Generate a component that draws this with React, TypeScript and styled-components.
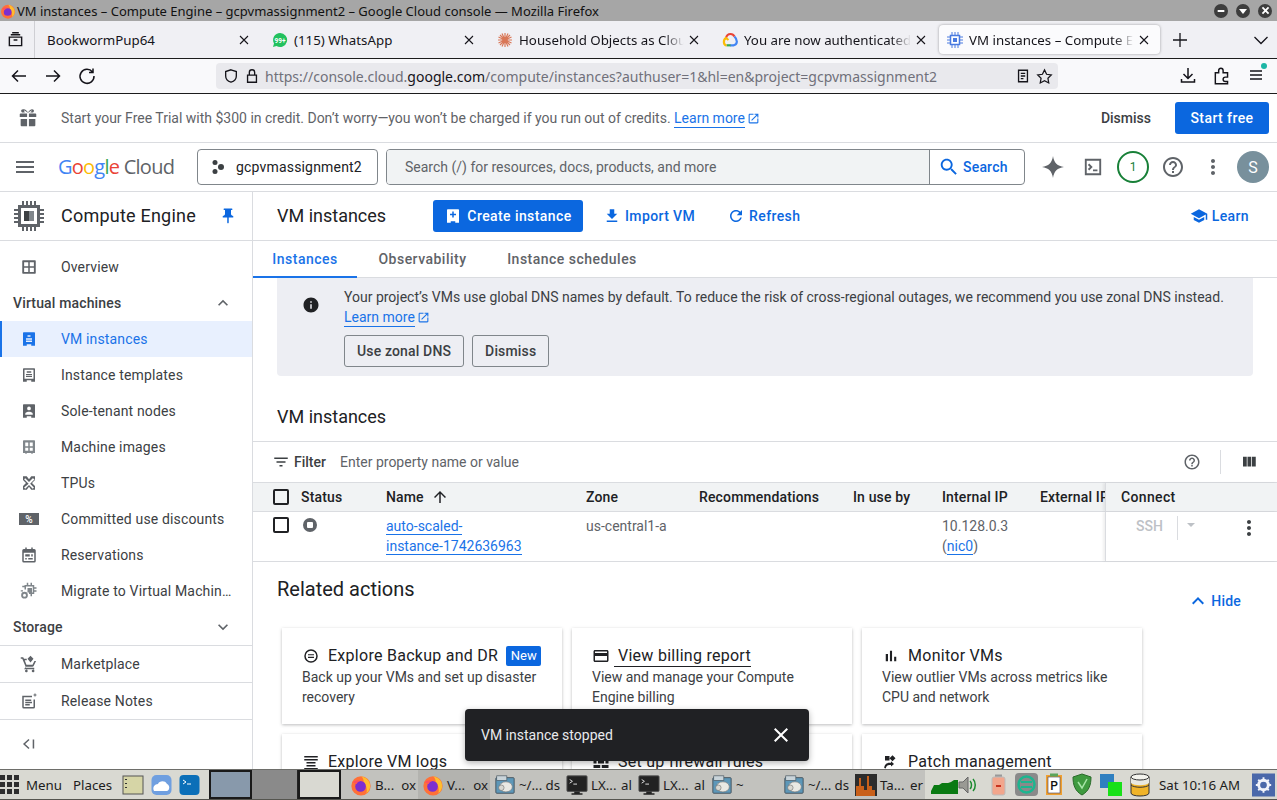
import React from "react";
import styled, { createGlobalStyle } from "styled-components";

const GlobalStyle = createGlobalStyle`
  html, body {
    margin: 0;
    padding: 0;
    height: 100%;
    overflow: hidden;
    background: #ffffff;
    font-family: Roboto, "Liberation Sans", sans-serif;
  }
  * {
    box-sizing: border-box;
  }
`;

const P = {
  menu: "M3 18h18v-2H3v2zm0-5h18v-2H3v2zm0-7v2h18V6H3z",
  info: "M12 2C6.48 2 2 6.48 2 12s4.48 10 10 10 10-4.48 10-10S17.52 2 12 2zm1 15h-2v-6h2v6zm0-8h-2V7h2v2z",
  search:
    "M15.5 14h-.79l-.28-.27C15.41 12.59 16 11.11 16 9.5 16 5.91 13.09 3 9.5 3S3 5.91 3 9.5 5.91 16 9.5 16c1.61 0 3.09-.59 4.23-1.57l.27.28v.79l5 4.99L20.49 19l-4.99-5zm-6 0C7.01 14 5 11.99 5 9.5S7.01 5 9.5 5 14 7.01 14 9.5 11.99 14 9.5 14z",
  refresh:
    "M17.65 6.35C16.2 4.9 14.21 4 12 4c-4.42 0-7.99 3.58-7.99 8s3.57 8 7.99 8c3.73 0 6.84-2.55 7.73-6h-2.08c-.82 2.33-3.04 4-5.65 4-3.31 0-6-2.69-6-6s2.69-6 6-6c1.66 0 3.14.69 4.22 1.78L13 11h7V4l-2.35 2.35z",
  help: "M11 18h2v-2h-2v2zm1-16C6.48 2 2 6.48 2 12s4.48 10 10 10 10-4.48 10-10S17.52 2 12 2zm0 18c-4.41 0-8-3.59-8-8s3.59-8 8-8 8 3.59 8 8-3.59 8-8 8zm0-14c-2.21 0-4 1.79-4 4h2c0-1.1.9-2 2-2s2 .9 2 2c0 2-3 1.75-3 5h2c0-2.25 3-2.5 3-5 0-2.21-1.79-4-4-4z",
  school: "M5 13.18v4L12 21l7-3.82v-4L12 17l-7-3.82zM12 3L1 9l11 6 9-4.91V17h2V9L12 3z",
  close:
    "M19 6.41L17.59 5 12 10.59 6.41 5 5 6.41 10.59 12 5 17.59 6.41 19 12 13.41 17.59 19 19 17.59 13.41 12z",
  filter: "M10 18h4v-2h-4v2zM3 6v2h18V6H3zm3 7h12v-2H6v2z",
  up: "M4 12l1.41 1.41L11 7.83V20h2V7.83l5.58 5.59L20 12l-8-8-8 8z",
  less: "M12 8l-6 6 1.41 1.41L12 10.83l4.59 4.58L18 14z",
  more: "M16.59 8.59L12 13.17 7.41 8.59 6 10l6 6 6-6z",
  columns: "M10 18h5V5h-5v13zm-6 0h5V5H4v13zM16 5v13h5V5h-5z",
  pin: "M16 9V4h1c.55 0 1-.45 1-1s-.45-1-1-1H7c-.55 0-1 .45-1 1s.45 1 1 1h1v5c0 1.66-1.34 3-3 3v2h5.97v7l1 1 1-1v-7H19v-2c-1.66 0-3-1.34-3-3z",
  download: "M19 9h-4V3H9v6H5l7 7 7-7zM5 18v2h14v-2H5z",
  external:
    "M19 19H5V5h7V3H5c-1.11 0-2 .9-2 2v14c0 1.1.89 2 2 2h14c1.1 0 2-.9 2-2v-7h-2v7zM14 3v2h3.59l-9.83 9.83 1.41 1.41L19 6.41V10h2V3h-7z",
  card: "M20 4H4c-1.11 0-1.99.89-1.99 2L2 18c0 1.11.89 2 2 2h16c1.11 0 2-.89 2-2V6c0-1.11-.89-2-2-2zm0 14H4v-6h16v6zm0-10H4V6h16v2z",
  bars: "M5 9.2h3V19H5zM10.6 5h2.8v14h-2.8zm5.6 8H19v6h-2.8z",
  dots: "M12 8c1.1 0 2-.9 2-2s-.9-2-2-2-2 .9-2 2 .9 2 2 2zm0 2c-1.1 0-2 .9-2 2s.9 2 2 2 2-.9 2-2-.9-2-2-2zm0 6c-1.1 0-2 .9-2 2s.9 2 2 2 2-.9 2-2-.9-2-2-2z",
  gift: "M4 7h7v4H3V8a1 1 0 0 1 1-1zm9 0h7a1 1 0 0 1 1 1v3h-8zM4 13h7v8H5a1 1 0 0 1-1-1zm9 0h7v7a1 1 0 0 1-1 1h-6zM7.5 2.5c1.6 0 3.4 1.4 4.5 3.5 1.1-2.1 2.9-3.5 4.500-3.500 1.300 0 2 .8 2 1.700 0 .8-.4 1.300-1 1.800h-3l2-2.100c-.9-.3-2.700 1-3.500 2.100h-2c-.8-1.100-2.600-2.400-3.500-2.100L8.500 6h-3c-.6-.5-1-1-1-1.800 0-.9.7-1.700 2-1.700z",
  overview:
    "M4 3h16a1 1 0 0 1 1 1v16a1 1 0 0 1-1 1H4a1 1 0 0 1-1-1V4a1 1 0 0 1 1-1zm1.500 2.500v5.500h5.500V5.500H5.500zm7.500 0v5.500h5.500V5.500H13zm-7.500 7.500v5.500h5.500V13H5.500zm7.500 0v5.500h5.500V13H13z",
  instance:
    "M5 3h14a1 1 0 0 1 1 1v17h-5v-2H9v2H4V4a1 1 0 0 1 1-1zm5 4v2h4V7h-4zm-2 4v2h8v-2H8zm0 3v2h8v-2H8z",
  template:
    "M5 3h14a1 1 0 0 1 1 1v17h-5v-2H9v2H4V4a1 1 0 0 1 1-1zm1 2v12h12V5H6zm3 2h6v2H9V7zm-1 3.500h8v1.500H8zm0 2.500h8v1.500H8z",
  tenant:
    "M5 3h14a1 1 0 0 1 1 1v17h-5v-2H9v2H4V4a1 1 0 0 1 1-1zm7 3a2.500 2.500 0 1 0 0 5 2.500 2.500 0 0 0 0-5zm-5 9.500V17h10v-1.500c0-1.700-3.300-2.500-5-2.500s-5 .8-5 2.500z",
  image:
    "M5 3h14a1 1 0 0 1 1 1v16h-3v1h-2v-1H9v1H7v-1H4V4a1 1 0 0 1 1-1zm2 3v5h4V6H7zm6 0v5h4V6h-4zm-6 7v4h4v-4H7zm6 0v4h4v-4h-4z",
  tpu: "M4 3h5l3 4 3-4h5v5l-4 4 4 4v5h-5l-3-4-3 4H4v-5l4-4-4-4V3zm3 2.500L5.500 7l6 6-6 5 1.500 1.500 5-5 5 5 1.500-1.500-5-5 6-6L17 5.500l-5 5-5-5z",
  calendar:
    "M7 2h2v2h6V2h2v2h2a2 2 0 0 1 2 2v14a2 2 0 0 1-2 2H5a2 2 0 0 1-2-2V6a2 2 0 0 1 2-2h2V2zM5 9v11h14V9H5zm2 2h6v3H7v-3zm8 0h2v3h-2v-3zM7 16h2v2H7v-2zm4 0h6v2h-6v-2z",
  cart: "M1 3h3.300l1 2H9v2H6.300l2.300 6h8.100l2.500-5h2.200l-3.200 6.500c-.3.6-.9 1-1.700 1H8.100l-1 1.500H19v2H5.500l2-3.300L3 5H1V3zM8 19.500a1.800 1.800 0 1 1 0 3.500 1.800 1.800 0 0 1 0-3.500zm9 0a1.800 1.800 0 1 1 0 3.500 1.800 1.800 0 0 1 0-3.500zM14 1l4 4-4 5-4-5 4-4z",
  notes:
    "M3 5h13v2H5v13h13V10h2v10a2 2 0 0 1-2 2H5a2 2 0 0 1-2-2V5zm4 5h8v2H7v-2zm0 3h9v2H7v-2zm0 3h6v2H7v-2zM20 1l.8 2.200L23 4l-2.200.8L20 7l-.8-2.200L17 4l2.200-.8L20 1z",
  migrate:
    "M9 1h2v3h3V1h2v3h3v3h3v2h-3v2h3v2h-3v3h-3v3h-2v-3h-2v-2h5V6H8v4H6V7H3V5h3V4h3V1zm1 7h6v6h-6V8zM6 13a4.500 4.500 0 1 1 0 9 4.500 4.500 0 0 1 0-9zm0 2.500a2 2 0 1 0 0 4 2 2 0 0 0 0-4zM1 11h3v1.500H1z",
  backup:
    "M12 3a9 9 0 1 1 0 18 9 9 0 0 1 0-18zm0 2a7 7 0 1 0 0 14 7 7 0 0 0 0-14zM8 9.500h8V11H8zM8 13h8v1.500H8z",
  logs: "M3 4h18v2H3zm0 4h18v2H3zm3 4h12v2H6zm0 4h12v2H6zm-3 4h18v2H3z",
  bricks: "M2 4h9v4H2zm11 0h9v4h-9zM2 10h4v4H2zm6 0h8v4H8zm10 0h4v4h-4zM2 16h9v4H2zm11 0h9v4h-9z",
  patch:
    "M4 4h6v6H4zm10-1l4 4-4 4-4-4zM3 20c0-4 3-7 7-7h2v-2l4 3.500-4 3.500v-2h-2c-2.500 0-4.500 1.500-5 4.500z",
  createVm:
    "M5 3h14a1 1 0 0 1 1 1v17h-5v-2H9v2H4V4a1 1 0 0 1 1-1zm6 3v3H8v2h3v3h2v-3h3V9h-3V6h-2z",
  spark:
    "M12 1c.8 6.500 4.500 10.200 11 11-6.500.8-10.200 4.500-11 11-.8-6.500-4.500-10.200-11-11 6.500-.8 10.200-4.500 11-11z",
};

const CLOSE_X = "M4.500 4.500l9 9M13.500 4.500l-9 9";

const Glyph = styled.svg<{ $color?: string; $size?: number }>`
  width: ${(p) => p.$size ?? 18}px;
  height: ${(p) => p.$size ?? 18}px;
  fill: ${(p) => p.$color ?? "#5f6368"};
  flex: none;
  display: block;
`;

const Icon = ({ d, size, color }: { d: string; size?: number; color?: string }) => (
  <Glyph viewBox="0 0 24 24" $size={size} $color={color}>
    <path d={d} fillRule="evenodd" />
  </Glyph>
);

const Page = styled.div`
  width: 100%;
  height: 100vh;
  display: flex;
  flex-direction: column;
  overflow: hidden;
`;

/* window frame */
const TitleBar = styled.div`
  height: 21px;
  flex: none;
  background: #a6a6a6;
  display: flex;
  align-items: center;
  padding: 0 5px 0 0;
  font: 13px "Noto Sans", sans-serif;
  color: #111;
`;

const TitleText = styled.span`
  flex: 1;
  margin-left: 1px;
`;

const WinButtons = styled.div`
  display: flex;
  gap: 8px;
`;

const WinButton = styled.span`
  width: 14px;
  height: 14px;
  border-radius: 50%;
  background: #3d3d3d;
  display: flex;
  align-items: center;
  justify-content: center;
`;

const TabStrip = styled.div`
  height: 38px;
  flex: none;
  background: #f0f0f4;
  border-bottom: 1px solid #1c1c1c;
  display: flex;
  align-items: stretch;
`;

const TabManager = styled.div`
  width: 35px;
  flex: none;
  display: flex;
  align-items: center;
  padding-left: 7px;
  border-right: 1px solid #cfcfd4;
`;

const BrowserTab = styled.div<{ $active?: boolean; $width: number }>`
  width: ${(p) => p.$width}px;
  flex: none;
  height: 29px;
  margin: 4px 0 0 ${(p) => (p.$active ? "2px" : "0")};
  display: flex;
  align-items: center;
  padding: 0 8px 0 ${(p) => (p.$active ? "8px" : "12px")};
  gap: 6px;
  border-radius: 4px;
  background: ${(p) => (p.$active ? "#fbfbfd" : "transparent")};
  box-shadow: ${(p) => (p.$active ? "0 0 3px rgba(0,0,0,0.35)" : "none")};
  font: 13.3px "Noto Sans", sans-serif;
  color: #15141a;
`;

const TabLabel = styled.span<{ $fade?: boolean }>`
  flex: 1;
  min-width: 0;
  overflow: hidden;
  white-space: nowrap;
  margin-right: ${(p) => (p.$fade ? "-4px" : "0")};
  mask-image: ${(p) => (p.$fade ? "linear-gradient(to right, #000 88%, transparent 100%)" : "none")};
`;

const StripEnd = styled.div`
  flex: 1;
  display: flex;
  align-items: center;
  justify-content: space-between;
  padding: 0 7px 0 11px;
`;

const NavBar = styled.div`
  height: 35px;
  flex: none;
  background: #f9f9fb;
  border-bottom: 1px solid #1c1c1c;
  display: flex;
  align-items: center;
  padding: 0 12px 0 10px;
`;

const NavButtons = styled.div`
  width: 206px;
  flex: none;
  display: flex;
  gap: 16px;
`;

const UrlBar = styled.div`
  width: 842px;
  height: 26px;
  flex: none;
  border-radius: 4px;
  background: #e9e9ed;
  display: flex;
  align-items: center;
  padding: 0 5px 0 7px;
  gap: 5px;
  font: 14px "Noto Sans", sans-serif;
  color: #70707a;
`;

const UrlText = styled.span`
  flex: 1;
  white-space: nowrap;
  > b {
    font-weight: 400;
    color: #15141a;
  }
`;

const NavEnd = styled.div`
  flex: 1;
  display: flex;
  justify-content: flex-end;
  gap: 15px;
`;

const MenuDot = styled.span`
  position: absolute;
  top: -3px;
  right: -2px;
  width: 6px;
  height: 6px;
  border-radius: 50%;
  background: #1db6a5;
`;

const MenuWrap = styled.span`
  position: relative;
  display: block;
`;

/* console area */
const Viewport = styled.div`
  flex: 1;
  min-height: 0;
  display: flex;
  flex-direction: column;
  position: relative;
  overflow: hidden;
`;

const TrialBar = styled.div`
  height: 49px;
  flex: none;
  border-bottom: 1px solid #dadce0;
  display: flex;
  align-items: center;
  padding: 0 8px 0 17px;
  font-size: 14px;
  color: #5f6368;
`;

const TrialText = styled.span`
  margin-left: 22px;
  flex: 1;
  display: flex;
  align-items: center;
  white-space: pre;
`;

const Anchor = styled.a`
  color: #1a73e8;
  border-bottom: 1px solid #1a73e8;
  line-height: 18px;
  margin-right: 2px;
`;

const TextButton = styled.span`
  font-weight: 500;
  color: #3c4043;
  margin-right: 24px;
`;

const PrimaryButton = styled.span<{ $width: number }>`
  width: ${(p) => p.$width}px;
  height: 32px;
  border-radius: 3px;
  background: #0b67df;
  color: #fff;
  font-size: 14px;
  font-weight: 500;
  letter-spacing: 0.42px;
  display: flex;
  align-items: center;
  justify-content: center;
  gap: 5px;
`;

const CloudHeader = styled.div`
  height: 49px;
  flex: none;
  border-bottom: 1px solid #dadce0;
  display: flex;
  align-items: center;
  padding: 0 4px 0 13px;
`;

const Logo = styled.div`
  margin-left: 21px;
  width: 139px;
  flex: none;
  font: 20px "Open Sans", sans-serif;
  letter-spacing: -0.75px;
  color: #5f6368;
  white-space: pre;
  margin-top: -2px;
`;

const LogoLetter = styled.span<{ $c: string }>`
  color: ${(p) => p.$c};
`;

const ProjectPicker = styled.div`
  width: 181px;
  height: 36px;
  flex: none;
  border: 1px solid #80868b;
  border-radius: 4px;
  display: flex;
  align-items: center;
  gap: 11px;
  padding-left: 13px;
  font-size: 14px;
  letter-spacing: 0.18px;
  color: #202124;
`;

const SearchBox = styled.div`
  width: 639px;
  height: 36px;
  flex: none;
  margin-left: 8px;
  border: 1px solid #80868b;
  border-radius: 4px;
  display: flex;
  overflow: hidden;
  font-size: 14px;
`;

const SearchInput = styled.div`
  flex: 1;
  background: #f1f3f4;
  color: #5f6368;
  display: flex;
  align-items: center;
  padding-left: 18px;
`;

const SearchAction = styled.div`
  width: 95px;
  flex: none;
  border-left: 1px solid #80868b;
  display: flex;
  align-items: center;
  gap: 3px;
  padding-left: 8px;
  color: #0b67df;
  font-weight: 500;
  letter-spacing: 0.2px;
`;

const HeaderTools = styled.div`
  margin-left: 8px;
  display: grid;
  grid-template-columns: repeat(6, 40px);
  align-items: center;
  justify-items: center;
`;

const CountRing = styled.div`
  width: 32px;
  height: 32px;
  border: 2px solid #188038;
  border-radius: 50%;
  display: flex;
  align-items: center;
  justify-content: center;
  font-size: 12px;
  color: #188038;
`;

const Avatar = styled.div`
  width: 32px;
  height: 32px;
  border-radius: 50%;
  background: #78909c;
  color: #fff;
  font-size: 16px;
  display: flex;
  align-items: center;
  justify-content: center;
`;

const Body = styled.div`
  flex: 1;
  min-height: 0;
  display: flex;
`;

/* left navigation */
const Sidebar = styled.nav`
  width: 253px;
  flex: none;
  border-right: 1px solid #dadce0;
  display: flex;
  flex-direction: column;
  font-size: 14px;
  color: #3c4043;
`;

const ProductHead = styled.div`
  height: 49px;
  flex: none;
  border-bottom: 1px solid #dadce0;
  display: flex;
  align-items: center;
  padding: 0 15px 0 13px;
`;

const ProductName = styled.span`
  flex: 1;
  margin: -2px 0 0 16px;
  font-size: 18px;
  letter-spacing: 0.22px;
  color: #202124;
`;

const NavList = styled.div`
  padding-top: 8px;
  display: flex;
  flex-direction: column;
`;

const NavRow = styled.div<{ $active?: boolean }>`
  height: 36px;
  display: flex;
  align-items: center;
  padding-left: 20px;
  gap: 23px;
  white-space: nowrap;
  color: ${(p) => (p.$active ? "#1a73e8" : "#3c4043")};
  background: ${(p) => (p.$active ? "#e8f0fe" : "transparent")};
  box-shadow: ${(p) => (p.$active ? "inset 2px 0 0 #1a73e8" : "none")};
  letter-spacing: 0.15px;
`;

const NavGroup = styled.div`
  height: 36px;
  display: flex;
  align-items: center;
  justify-content: space-between;
  padding: 0 19px 0 13px;
  font-weight: 500;
  color: #3c4043;
  letter-spacing: 0.15px;
`;

const FootRow = styled(NavRow)`
  height: 37px;
  border-top: 1px solid #dadce0;
`;

const CollapseRow = styled.div`
  height: 49px;
  border-top: 1px solid #dadce0;
  display: flex;
  align-items: center;
  padding-left: 21px;
`;

/* main column */
const Main = styled.main`
  flex: 1;
  min-width: 0;
  display: flex;
  flex-direction: column;
  overflow: hidden;
  font-size: 14px;
`;

const Toolbar = styled.div`
  height: 49px;
  flex: none;
  border-bottom: 1px solid #dadce0;
  display: flex;
  align-items: center;
  padding: 0 28px 0 24px;
`;

const PageTitle = styled.h1`
  width: 156px;
  margin: -2px 0 0;
  font-size: 18px;
  font-weight: 400;
  color: #202124;
`;

const ToolLink = styled.span<{ $left: number }>`
  margin-left: ${(p) => p.$left}px;
  display: flex;
  align-items: center;
  gap: 4px;
  color: #0b67df;
  font-weight: 500;
  letter-spacing: 0.38px;
`;

const LearnLink = styled(ToolLink)`
  margin-left: auto;
`;

const TabRow = styled.div`
  height: 37px;
  flex: none;
  border-bottom: 1px solid #dadce0;
  display: flex;
`;

const PageTab = styled.div<{ $active?: boolean; $width: number }>`
  width: ${(p) => p.$width}px;
  display: flex;
  align-items: center;
  justify-content: center;
  padding-bottom: 2px;
  font-weight: 500;
  letter-spacing: 0.48px;
  color: ${(p) => (p.$active ? "#1a73e8" : "#5f6368")};
  box-shadow: ${(p) => (p.$active ? "inset 0 -2px 0 #1a73e8" : "none")};
  margin-bottom: -1px;
`;

const Notice = styled.div`
  height: 98px;
  flex: none;
  margin: 0 24px;
  padding: 9px 10px 0 25px;
  background: #edeef3;
  border-radius: 0 0 4px 4px;
  display: flex;
  gap: 24px;
  color: #3c4043;
`;

const NoticeIcon = styled.div`
  padding-top: 9px;
`;

const NoticeBody = styled.div`
  line-height: 20px;
`;

const ExternalLine = styled.div`
  display: flex;
  align-items: center;
  margin-top: 1px;
`;

const NoticeActions = styled.div`
  display: flex;
  gap: 8px;
  margin-top: 8px;
`;

const OutlineButton = styled.span`
  height: 32px;
  padding: 0 12px;
  border: 1px solid #80868b;
  border-radius: 3px;
  display: flex;
  align-items: center;
  font-weight: 500;
  letter-spacing: 0.15px;
  color: #3c4043;
`;

const SectionTitle = styled.h2`
  height: 65px;
  flex: none;
  margin: 0;
  padding: 29px 24px 0;
  font-size: 18px;
  line-height: 24px;
  font-weight: 400;
  color: #202124;
`;

const FilterBar = styled.div`
  height: 41px;
  flex: none;
  border-top: 1px solid #dadce0;
  display: flex;
  align-items: center;
  padding: 0 19px 0 19px;
  gap: 4px;
`;

const FilterLabel = styled.span`
  font-weight: 500;
  color: #3c4043;
  width: 42px;
`;

const FilterHint = styled.span`
  flex: 1;
  color: #5f6368;
`;

const FilterDivider = styled.span`
  width: 1px;
  height: 24px;
  background: #dadce0;
  margin: 0 15px;
`;

const GridRow = styled.div<{ $head?: boolean }>`
  display: grid;
  grid-template-columns: 48px 85px 200px 113px 154px 89px 98px 65px 172px;
  height: ${(p) => (p.$head ? "30px" : "51px")};
  flex: none;
  border-top: 1px solid #dadce0;
  background: ${(p) => (p.$head ? "#f1f3f4" : "#fff")};
  border-bottom: 1px solid #dadce0;
  margin-bottom: ${(p) => (p.$head ? "-1px" : "0")};
  color: ${(p) => (p.$head ? "#202124" : "#5f6368")};
  font-weight: ${(p) => (p.$head ? 500 : 400)};
  letter-spacing: ${(p) => (p.$head ? "0.15px" : "0")};
  line-height: 20px;
`;

const HeadCell = styled.div`
  display: flex;
  align-items: center;
  white-space: nowrap;
  overflow: hidden;
  gap: 7px;
`;

const Cell = styled.div`
  padding-top: 4px;
`;

const CheckCell = styled.div<{ $head?: boolean }>`
  padding: ${(p) => (p.$head ? "6px" : "5px")} 0 0 20px;
`;

const CheckBox = styled.span`
  display: block;
  width: 16px;
  height: 16px;
  border: 2px solid #202124;
  border-radius: 2px;
`;

const StopDot = styled.span`
  display: flex;
  width: 14px;
  height: 14px;
  margin: 2px 0 0 2px;
  border-radius: 50%;
  background: #5f6368;
  align-items: center;
  justify-content: center;
  &::after {
    content: "";
    width: 6px;
    height: 6px;
    background: #fff;
    border-radius: 1px;
  }
`;

const TableLink = styled.a`
  color: #1a73e8;
  border-bottom: 1px solid #1a73e8;
`;

const ConnectHead = styled(HeadCell)`
  padding-left: 15px;
  border-left: 1px solid #dadce0;
  box-shadow: -2px 0 2px rgba(60, 64, 67, 0.08);
  letter-spacing: 0.35px;
`;

const ConnectCell = styled.div`
  border-left: 1px solid #dadce0;
  box-shadow: -2px 0 2px rgba(60, 64, 67, 0.08);
  padding: 4px 16px 0 30px;
  display: flex;
  align-items: flex-start;
`;

const SshLabel = styled.span`
  width: 42px;
  height: 24px;
  line-height: 20px;
  font-weight: 500;
  color: #bdc1c6;
  border-right: 1px solid #dadce0;
`;

const Caret = styled.span`
  margin: 7px 0 0 9px;
  width: 0;
  height: 0;
  border-left: 4px solid transparent;
  border-right: 4px solid transparent;
  border-top: 4px solid #bdc1c6;
  flex: 1;
  max-width: 8px;
`;

const RowMenu = styled.span`
  margin-left: auto;
`;

const RelatedHead = styled.div`
  height: 66px;
  flex: none;
  display: flex;
  justify-content: space-between;
  padding: 14px 36px 0 24px;
`;

const RelatedTitle = styled.h2`
  margin: 0;
  font-size: 20px;
  line-height: 26px;
  font-weight: 400;
  color: #202124;
`;

const HideLink = styled.span`
  margin-top: 15px;
  height: 20px;
  display: flex;
  align-items: center;
  gap: 1px;
  color: #0b67df;
  font-weight: 500;
  letter-spacing: 0.2px;
`;

const CardGrid = styled.div`
  display: grid;
  grid-template-columns: repeat(3, 280px);
  grid-auto-rows: 96px;
  gap: 10px;
  padding-left: 29px;
`;

const ActionCard = styled.div`
  padding: 18px 20px 0;
  box-shadow: 0 1px 3px rgba(60, 64, 67, 0.35);
  color: #3c4043;
  line-height: 20px;
`;

const CardTitle = styled.div`
  display: flex;
  align-items: center;
  gap: 8px;
  height: 20px;
  font-size: 16px;
  letter-spacing: 0.27px;
  color: #202124;
  margin-bottom: 1px;
  white-space: nowrap;
`;

const UnderlinedTitle = styled.span`
  border-bottom: 1px solid #202124;
  margin-left: -4px;
  padding-left: 4px;
`;

const NewBadge = styled.span`
  width: 35px;
  height: 20px;
  border-radius: 2px;
  background: #0b67df;
  color: #fff;
  font-size: 13px;
  font-weight: 400;
  letter-spacing: 0;
  display: flex;
  align-items: center;
  justify-content: center;
`;

const Toast = styled.div`
  position: absolute;
  left: 465px;
  bottom: 8px;
  width: 344px;
  height: 52px;
  border-radius: 4px;
  background: #202124;
  color: #e8eaed;
  font-size: 14px;
  display: flex;
  align-items: center;
  justify-content: space-between;
  padding: 0 16px;
  box-shadow: 0 2px 6px rgba(0, 0, 0, 0.3);
`;

/* desktop panel */
const Taskbar = styled.footer`
  height: 31px;
  flex: none;
  background: #d9d9d2;
  border-top: 1px solid #6e6e6a;
  border-bottom: 1px solid #55554f;
  display: flex;
  align-items: center;
  font: 13.3px "Noto Sans", sans-serif;
  color: #1c1c1c;
  white-space: nowrap;
`;

const AppsGrid = styled.span`
  width: 20px;
  margin-right: 6px;
  flex: none;
  display: grid;
  grid-template-columns: repeat(3, 5px);
  gap: 2px;
  > i {
    height: 5px;
    background: #2e2e2e;
  }
`;

const PanelWord = styled.span<{ $width: number }>`
  width: ${(p) => p.$width}px;
  flex: none;
`;

const Launchers = styled.div`
  display: flex;
  gap: 7px;
  width: 87px;
  flex: none;
`;

const PagerCell = styled.div<{ $on?: boolean }>`
  width: 43px;
  height: 100%;
  flex: none;
  background: ${(p) => (p.$on ? "#8899ab" : "#d9d9d2")};
  border: 2px solid #1a1a1a;
`;

const PagerGap = styled.div`
  width: 46px;
  height: 100%;
  flex: none;
  background: #8a8a8a;
  border-right: 1px solid #222;
`;

const TaskList = styled.div`
  width: 584px;
  height: 100%;
  flex: none;
  display: flex;
  background: #c2c2be;
  padding-left: 1px;
`;

const Task = styled.div<{ $active?: boolean; $width: number; $first?: boolean }>`
  width: ${(p) => p.$width}px;
  flex: none;
  display: flex;
  align-items: center;
  padding-left: ${(p) => (p.$first ? "8px" : "4px")};
  gap: 3px;
  background: ${(p) => (p.$active ? "#b3b3af" : "transparent")};
`;

const TaskText = styled.span`
  flex: 1;
  display: flex;
  justify-content: space-between;
  padding-right: 2px;
`;

const Tray = styled.div`
  flex: 1;
  display: flex;
  align-items: center;
  padding-left: 6px;
`;

const TrayGap = styled.span<{ $w: number }>`
  width: ${(p) => p.$w}px;
  flex: none;
`;

/* drawings */
const Firefox = ({ size = 22 }: { size?: number }) => (
  <svg width={size} height={size} viewBox="0 0 24 24" style={{ flex: "none" }}>
    <circle cx="12" cy="13" r="10.500" fill="#ff7139" />
    <path d="M12 2.500c5.500 1 10 5 10 10.500 0 3-1.500 6-4 8 1-4 0-9-3-12 0-3-1-5-3-6.500z" fill="#ffbd2e" />
    <circle cx="11.500" cy="13.500" r="5.800" fill="#7b2fd0" />
    <path d="M3 9c2-2 5-3 8-1.500-2 .5-3.500 2-3.500 3.500 0 0-2-1-4.500-2z" fill="#ff4f5e" />
  </svg>
);

const FolderApp = () => (
  <svg width="22" height="22" viewBox="0 0 24 24" style={{ flex: "none" }}>
    <rect x="2" y="4" width="20" height="17" rx="1" fill="#5d97b8" stroke="#45525c" />
    <rect x="3" y="2" width="11" height="5" fill="#c9d4da" stroke="#45525c" strokeWidth="0.7" />
    <ellipse cx="13" cy="14" rx="7" ry="5.500" fill="#e9e9e4" stroke="#777" strokeWidth="0.7" />
    <circle cx="8" cy="15" r="3" fill="#d8d8d2" stroke="#666" strokeWidth="0.6" />
  </svg>
);

const TerminalApp = () => (
  <svg width="22" height="22" viewBox="0 0 24 24" style={{ flex: "none" }}>
    <rect x="1" y="2" width="22" height="17" rx="1" fill="#222" stroke="#555" />
    <path d="M4 6l3 2-3 2M8 11h4" stroke="#eee" fill="none" />
    <path d="M9 19h6v2h3v1.500H6V21h3z" fill="#222" />
  </svg>
);

const ChipTab = () => (
  <svg width="16" height="16" viewBox="0 0 16 16" style={{ flex: "none" }}>
    <rect x="3.500" y="3.500" width="9" height="9" fill="#fff" stroke="#4a7be0" strokeWidth="1.500" />
    <rect x="6" y="6" width="4" height="4" fill="#4a7be0" />
    <path d="M5 0v3M8 0v3M11 0v3M5 13v3M8 13v3M11 13v3M0 5h3M0 8h3M0 11h3M13 5h3M13 8h3M13 11h3" stroke="#4a7be0" />
  </svg>
);

const CloudTab = () => (
  <svg width="16" height="16" viewBox="0 0 16 16" style={{ flex: "none" }}>
    <path d="M4 6c.6-2.500 2.500-4 4.500-4 1.800 0 3.200 1 3.900 2.500" stroke="#ea4335" strokeWidth="2.200" fill="none" />
    <path d="M12.400 4.500C14 6 15 8 14.800 10c-.2 2-1.500 3-3.300 3.300H8" stroke="#4285f4" strokeWidth="2.200" fill="none" />
    <path d="M8.500 13.300H4.500" stroke="#34a853" strokeWidth="2.200" />
    <path d="M4.500 13.300C1.500 13 0.800 8 4 6l2.500 2" stroke="#fbbc05" strokeWidth="2.200" fill="none" />
  </svg>
);

const ClaudeTab = () => (
  <svg width="16" height="16" viewBox="0 0 16 16" style={{ flex: "none" }}>
    <path
      d="M8 1v14M1 8h14M3 3l10 10M13 3L3 13M5 1.500l6 13M11 1.500l-6 13M1.500 5l13 6M14.500 5l-13 6"
      stroke="#d97757"
      strokeWidth="1.200"
    />
  </svg>
);

const WhatsTab = () => (
  <svg width="16" height="16" viewBox="0 0 16 16" style={{ flex: "none" }}>
    <path d="M8 1a7 7 0 1 1-3.500 13L1 15l1-3.500A7 7 0 0 1 8 1z" fill="#22c15e" />
    <text x="8" y="10.500" fontSize="6.500" fontFamily="Roboto" fontWeight="700" textAnchor="middle" fill="#fff">
      99+
    </text>
  </svg>
);

const Stroke = ({ d, size = 18, color = "#15141a", w = 1.500 }: { d: string; size?: number; color?: string; w?: number }) => (
  <svg width={size} height={size} viewBox="0 0 18 18" fill="none" stroke={color} strokeWidth={w} style={{ flex: "none", display: "block" }}>
    <path d={d} />
  </svg>
);

const ComputeLogo = () => (
  <svg width="32" height="32" viewBox="0 0 32 32" style={{ flex: "none" }}>
    <rect x="6.500" y="6.500" width="19" height="19" fill="#fff" stroke="#5f6368" strokeWidth="3" />
    <path d="M11 11h10v10H11z" fill="#80868b" />
    <path d="M11 11h5v10h-5z" fill="#3c4043" />
    <path d="M10 1v4M14 1v4M18 1v4M22 1v4M10 27v4M14 27v4M18 27v4M22 27v4M1 10h4M1 14h4M1 18h4M1 22h4M27 10h4M27 14h4M27 18h4M27 22h4" stroke="#5f6368" strokeWidth="2" />
  </svg>
);

const DiscountIcon = () => (
  <svg width="20" height="18" viewBox="0 0 20 18" style={{ flex: "none", marginLeft: -1, marginRight: -1 }}>
    <rect y="3" width="20" height="12" fill="#5f6368" />
    <text x="10" y="13" fontSize="10" fontFamily="Roboto" fontWeight="500" fill="#fff" textAnchor="middle">
      %
    </text>
  </svg>
);

const ProjectDots = () => (
  <svg width="14" height="16" viewBox="0 0 14 16" style={{ flex: "none" }}>
    <circle cx="4" cy="3.500" r="2.500" fill="#3c4043" />
    <circle cx="10" cy="8" r="3" fill="#3c4043" />
    <circle cx="4" cy="12.500" r="2.500" fill="#3c4043" />
  </svg>
);

const navItems: { label: string; d?: string; active?: boolean; tone?: string }[] = [
  { label: "VM instances", d: P.instance, active: true, tone: "#1a73e8" },
  { label: "Instance templates", d: P.template },
  { label: "Sole-tenant nodes", d: P.tenant },
  { label: "Machine images", d: P.image, tone: "#80868b" },
  { label: "TPUs", d: P.tpu },
  { label: "Committed use discounts" },
  { label: "Reservations", d: P.calendar },
  { label: "Migrate to Virtual Machin…", d: P.migrate, tone: "#80868b" },
];

const logoLetters = [
  ["G", "#4285f4"],
  ["o", "#ea4335"],
  ["o", "#fbbc05"],
  ["g", "#4285f4"],
  ["l", "#34a853"],
  ["e", "#ea4335"],
];

const App = () => {
  return (
    <Page>
      <GlobalStyle />
      <TitleBar>
        <Firefox size={16} />
        <TitleText>VM instances – Compute Engine – gcpvmassignment2 – Google Cloud console — Mozilla Firefox</TitleText>
        <WinButtons>
          <WinButton>
            <Stroke d="M4 9h10" size={12} color="#fff" w={3} />
          </WinButton>
          <WinButton>
            <svg width="10" height="10" viewBox="0 0 10 10">
              <path d="M1 3h8L5 8z" fill="#fff" />
            </svg>
          </WinButton>
          <WinButton>
            <Stroke d="M4 4l10 10M14 4L4 14" size={11} color="#fff" w={3} />
          </WinButton>
        </WinButtons>
      </TitleBar>

      <TabStrip>
        <TabManager>
          <Stroke d="M2.500 6.500h13v9h-13zM4 4h10M5.500 1.800h7M7 9.500h4" size={17} />
        </TabManager>
        <BrowserTab $width={225}>
          <TabLabel>BookwormPup64</TabLabel>
          <Stroke d={CLOSE_X} size={16} w={1.200} />
        </BrowserTab>
        <BrowserTab $width={225}>
          <WhatsTab />
          <TabLabel>(115) WhatsApp</TabLabel>
          <Stroke d={CLOSE_X} size={16} w={1.200} />
        </BrowserTab>
        <BrowserTab $width={225}>
          <ClaudeTab />
          <TabLabel $fade>Household Objects as Cloud Computing</TabLabel>
          <Stroke d={CLOSE_X} size={16} w={1.200} />
        </BrowserTab>
        <BrowserTab $width={227}>
          <CloudTab />
          <TabLabel $fade>You are now authenticated with the gcloud</TabLabel>
          <Stroke d={CLOSE_X} size={16} w={1.200} />
        </BrowserTab>
        <BrowserTab $active $width={221}>
          <ChipTab />
          <TabLabel $fade>VM instances – Compute Engine</TabLabel>
          <Stroke d={CLOSE_X} size={16} w={1.200} />
        </BrowserTab>
        <StripEnd>
          <Stroke d="M9 2v14M2 9h14" size={18} w={1.300} />
          <Stroke d="M2.500 6l6.500 6.500L15.500 6" size={18} w={1.300} />
        </StripEnd>
      </TabStrip>

      <NavBar>
        <NavButtons>
          <Stroke d="M16 9H3M8 3.500L2.500 9 8 14.500" />
          <Stroke d="M2 9h13M10 3.500L15.500 9 10 14.500" />
          <Stroke d="M14.500 5A7 7 0 1 0 16 9M15 1.500V5.500H11" />
        </NavButtons>
        <UrlBar>
          <Stroke d="M9 2l6 2v5c0 3.500-2.500 6-6 7-3.500-1-6-3.500-6-7V4z" size={16} />
          <Stroke d="M4 8h10v8H4zM6 8V5a3 3 0 0 1 6 0v3" size={16} />
          <UrlText>
            https://console.cloud.<b>google.com</b>/compute/instances?authuser=1&amp;hl=en&amp;project=gcpvmassignment2
          </UrlText>
          <Stroke d="M4 2.500h10v13H4zM6.500 6h5M6.500 9h5M6.500 12h3" size={16} />
          <Stroke d="M9 2l2.200 4.600 5 .7-3.600 3.500.9 5L9 13.400l-4.500 2.400.9-5L1.800 7.300l5-.7z" size={17} w={1.300} />
        </UrlBar>
        <NavEnd>
          <Stroke d="M9 2v10M4.500 8L9 12.500 13.500 8M2.500 13v3h13v-3" />
          <Stroke d="M3 6h3V4a2 2 0 0 1 4 0v2h4v4h-2a2 2 0 0 0 0 4h2v2H3z" size={20} w={1.300} />
          <MenuWrap>
            <Stroke d="M3 5h12M3 9h12M3 13h12" />
            <MenuDot />
          </MenuWrap>
        </NavEnd>
      </NavBar>

      <Viewport>
        <TrialBar>
          <Icon d={P.gift} size={22} color="#5f6368" />
          <TrialText>
            Start your Free Trial with $300 in credit. Don’t worry—you won’t be charged if you run out of credits. <Anchor>Learn more</Anchor>
            <Icon d={P.external} size={13} color="#1a73e8" />
          </TrialText>
          <TextButton>Dismiss</TextButton>
          <PrimaryButton $width={94}>Start free</PrimaryButton>
        </TrialBar>

        <CloudHeader>
          <Icon d={P.menu} size={24} />
          <Logo>
            {logoLetters.map(([l, c], i) => (
              <LogoLetter key={i} $c={c}>
                {l}
              </LogoLetter>
            ))}{" "}
            Cloud
          </Logo>
          <ProjectPicker>
            <ProjectDots />
            gcpvmassignment2
          </ProjectPicker>
          <SearchBox>
            <SearchInput>Search (/) for resources, docs, products, and more</SearchInput>
            <SearchAction>
              <Icon d={P.search} size={22} color="#0b67df" />
              Search
            </SearchAction>
          </SearchBox>
          <HeaderTools>
            <Icon d={P.spark} size={24} />
            <Stroke d="M2.500 2.500h13v13h-13zM5 6.500L7.500 9 5 11.500M9 12h4" size={20} color="#5f6368" w={1.700} />
            <CountRing>1</CountRing>
            <Icon d={P.help} size={24} />
            <Icon d={P.dots} size={24} />
            <Avatar>S</Avatar>
          </HeaderTools>
        </CloudHeader>

        <Body>
          <Sidebar>
            <ProductHead>
              <ComputeLogo />
              <ProductName>Compute Engine</ProductName>
              <Icon d={P.pin} size={18} color="#0b67df" />
            </ProductHead>
            <NavList>
              <NavRow>
                <Icon d={P.overview} />
                Overview
              </NavRow>
              <NavGroup>
                Virtual machines
                <Icon d={P.less} size={20} />
              </NavGroup>
              {navItems.map((item) => (
                <NavRow key={item.label} $active={item.active}>
                  {item.d ? <Icon d={item.d} color={item.tone ?? "#5f6368"} /> : <DiscountIcon />}
                  {item.label}
                </NavRow>
              ))}
              <NavGroup>
                Storage
                <Icon d={P.more} size={20} />
              </NavGroup>
              <FootRow>
                <Icon d={P.cart} />
                Marketplace
              </FootRow>
              <FootRow>
                <Icon d={P.notes} />
                Release Notes
              </FootRow>
              <CollapseRow>
                <Stroke d="M9 4L3.500 9 9 14M14 4v10" size={16} color="#5f6368" w={1.700} />
              </CollapseRow>
            </NavList>
          </Sidebar>

          <Main>
            <Toolbar>
              <PageTitle>VM instances</PageTitle>
              <PrimaryButton $width={150}>
                <Icon d={P.createVm} size={18} color="#fff" />
                Create instance
              </PrimaryButton>
              <ToolLink $left={20}>
                <Icon d={P.download} color="#0b67df" />
                Import VM
              </ToolLink>
              <ToolLink $left={32}>
                <Icon d={P.refresh} color="#0b67df" />
                Refresh
              </ToolLink>
              <LearnLink $left={0}>
                <Icon d={P.school} color="#0b67df" />
                Learn
              </LearnLink>
            </Toolbar>

            <TabRow>
              <PageTab $active $width={104}>
                Instances
              </PageTab>
              <PageTab $width={131}>Observability</PageTab>
              <PageTab $width={168}>Instance schedules</PageTab>
            </TabRow>

            <Notice>
              <NoticeIcon>
                <Icon d={P.info} color="#202124" size={18} />
              </NoticeIcon>
              <NoticeBody>
                Your project’s VMs use global DNS names by default. To reduce the risk of cross-regional outages, we recommend you use zonal DNS instead.
                <ExternalLine>
                  <Anchor>Learn more</Anchor>
                  <Icon d={P.external} size={13} color="#1a73e8" />
                </ExternalLine>
                <NoticeActions>
                  <OutlineButton>Use zonal DNS</OutlineButton>
                  <OutlineButton>Dismiss</OutlineButton>
                </NoticeActions>
              </NoticeBody>
            </Notice>

            <SectionTitle>VM instances</SectionTitle>

            <FilterBar>
              <Icon d={P.filter} size={18} color="#3c4043" />
              <FilterLabel>Filter</FilterLabel>
              <FilterHint>Enter property name or value</FilterHint>
              <Icon d={P.help} size={18} />
              <FilterDivider />
              <Icon d={P.columns} size={18} color="#3c4043" />
            </FilterBar>

            <GridRow $head>
              <CheckCell $head>
                <CheckBox />
              </CheckCell>
              <HeadCell>Status</HeadCell>
              <HeadCell>
                Name <Icon d={P.up} size={18} color="#202124" />
              </HeadCell>
              <HeadCell>Zone</HeadCell>
              <HeadCell>Recommendations</HeadCell>
              <HeadCell>In use by</HeadCell>
              <HeadCell>Internal IP</HeadCell>
              <HeadCell>External IP</HeadCell>
              <ConnectHead>Connect</ConnectHead>
            </GridRow>

            <GridRow>
              <CheckCell>
                <CheckBox />
              </CheckCell>
              <Cell>
                <StopDot />
              </Cell>
              <Cell>
                <TableLink>auto-scaled-</TableLink>
                <br />
                <TableLink>instance-1742636963</TableLink>
              </Cell>
              <Cell>us-central1-a</Cell>
              <Cell />
              <Cell />
              <Cell>
                10.128.0.3
                <br />
                (<TableLink>nic0</TableLink>)
              </Cell>
              <Cell />
              <ConnectCell>
                <SshLabel>SSH</SshLabel>
                <Caret />
                <RowMenu>
                  <Icon d={P.dots} size={24} color="#3c4043" />
                </RowMenu>
              </ConnectCell>
            </GridRow>

            <RelatedHead>
              <RelatedTitle>Related actions</RelatedTitle>
              <HideLink>
                <Icon d={P.less} size={24} color="#0b67df" />
                Hide
              </HideLink>
            </RelatedHead>

            <CardGrid>
              <ActionCard>
                <CardTitle>
                  <Icon d={P.backup} size={18} color="#202124" />
                  Explore Backup and DR
                  <NewBadge>New</NewBadge>
                </CardTitle>
                Back up your VMs and set up disaster recovery
              </ActionCard>
              <ActionCard>
                <CardTitle>
                  <Icon d={P.card} size={18} color="#202124" />
                  <UnderlinedTitle>View billing report</UnderlinedTitle>
                </CardTitle>
                View and manage your Compute Engine billing
              </ActionCard>
              <ActionCard>
                <CardTitle>
                  <Icon d={P.bars} size={18} color="#202124" />
                  Monitor VMs
                </CardTitle>
                View outlier VMs across metrics like CPU and network
              </ActionCard>
              <ActionCard>
                <CardTitle>
                  <Icon d={P.logs} size={18} color="#202124" />
                  Explore VM logs
                </CardTitle>
              </ActionCard>
              <ActionCard>
                <CardTitle>
                  <Icon d={P.bricks} size={18} color="#202124" />
                  Set up firewall rules
                </CardTitle>
              </ActionCard>
              <ActionCard>
                <CardTitle>
                  <Icon d={P.patch} size={18} color="#202124" />
                  Patch management
                </CardTitle>
              </ActionCard>
            </CardGrid>
          </Main>
        </Body>

        <Toast>
          VM instance stopped
          <Icon d={P.close} size={24} color="#fff" />
        </Toast>
      </Viewport>

      <Taskbar>
        <AppsGrid>
          {Array.from({ length: 9 }).map((_, i) => (
            <i key={i} />
          ))}
        </AppsGrid>
        <PanelWord $width={47}>Menu</PanelWord>
        <PanelWord $width={49}>Places</PanelWord>
        <Launchers>
          <svg width="22" height="22" viewBox="0 0 22 22">
            <rect x="1" y="2" width="20" height="18" fill="#d6d5a6" stroke="#555" />
            <path d="M4 5v1M4 9v1M4 13v1" stroke="#333" strokeWidth="2" />
          </svg>
          <svg width="21" height="22" viewBox="0 0 21 22">
            <rect x="0.500" y="1" width="20" height="20" rx="5" fill="#6f9fe0" />
            <path d="M3 17c-2-4 1-7 4-7 1-3 7-4 9 0 3 1 3 6 0 7z" fill="#fff" />
          </svg>
          <svg width="21" height="22" viewBox="0 0 21 22">
            <rect x="0.500" y="1" width="20" height="20" rx="4" fill="#0b6fb8" />
            <path d="M4 6l3 2-3 2M8 10h4" stroke="#fff" fill="none" />
          </svg>
        </Launchers>
        <PagerCell $on />
        <PagerGap />
        <PagerCell />
        <TaskList>
          <Task $first $width={76}>
            <Firefox />
            <TaskText>
              <span>B...</span>
              <span>ox</span>
            </TaskText>
          </Task>
          <Task $active $width={72}>
            <Firefox />
            <TaskText>
              <span>V...</span>
              <span>ox</span>
            </TaskText>
          </Task>
          <Task $width={72}>
            <FolderApp />
            <TaskText>
              <span>~/...</span>
              <span>ds</span>
            </TaskText>
          </Task>
          <Task $width={72}>
            <TerminalApp />
            <TaskText>
              <span>LX...</span>
              <span>al</span>
            </TaskText>
          </Task>
          <Task $width={73}>
            <TerminalApp />
            <TaskText>
              <span>LX...</span>
              <span>al</span>
            </TaskText>
          </Task>
          <Task $width={72}>
            <FolderApp />
            <TaskText>
              <span>~</span>
            </TaskText>
          </Task>
          <Task $width={72}>
            <FolderApp />
            <TaskText>
              <span>~/...</span>
              <span>ds</span>
            </TaskText>
          </Task>
          <Task $width={74}>
            <svg width="22" height="22" viewBox="0 0 22 22" style={{ flex: "none" }}>
              <rect width="22" height="22" fill="#2c2c2c" />
              <path d="M1 22V12h3V4h2v8h3v4h3V2h2v10h3v4h3v6z" fill="#c9601a" />
            </svg>
            <TaskText>
              <span>Ta...</span>
              <span>er</span>
            </TaskText>
          </Task>
        </TaskList>
        <Tray>
          <svg width="27" height="18" viewBox="0 0 27 18" style={{ flex: "none" }}>
            <path d="M0 18V15L3 9h5l3-2h6l3-1 3-2h4v14z" fill="#0a7a12" />
          </svg>
          <svg width="20" height="20" viewBox="0 0 20 20" style={{ flex: "none" }}>
            <path d="M1 7h4l5-5v16l-5-5H1z" fill="#9a9a94" stroke="#666" />
            <path d="M12 6c2 2 2 6 0 8M15 4c3 3 3 9 0 12" stroke="#1b8a2f" strokeWidth="1.500" fill="none" />
          </svg>
          <TrayGap $w={13} />
          <svg width="15" height="22" viewBox="0 0 15 22" style={{ flex: "none" }}>
            <rect x="4" y="0.500" width="7" height="3" fill="#999" />
            <rect x="1" y="3" width="13" height="18" rx="2" fill="#f2a68c" stroke="#bbb" />
            <rect x="5" y="11" width="5" height="2" fill="#c8321e" />
          </svg>
          <TrayGap $w={9} />
          <svg width="23" height="23" viewBox="0 0 23 23" style={{ flex: "none" }}>
            <rect width="23" height="23" rx="4" fill="#8a8a8a" />
            <circle cx="11.500" cy="11.500" r="8" fill="none" stroke="#1db58f" strokeWidth="2.500" />
            <path d="M6 9h11M6 14h11" stroke="#1db58f" strokeWidth="2" />
          </svg>
          <TrayGap $w={7} />
          <svg width="18" height="23" viewBox="0 0 18 23" style={{ flex: "none" }}>
            <rect x="1" y="2" width="16" height="20" fill="#f0a030" />
            <rect x="3" y="4" width="12" height="16" fill="#fff" stroke="#446" strokeWidth="0.6" />
            <rect x="5" y="0.500" width="8" height="3" fill="#5aa55a" />
            <text x="9" y="17" fontSize="12" fontFamily="Roboto" fontWeight="500" textAnchor="middle" fill="#111">
              P
            </text>
          </svg>
          <TrayGap $w={9} />
          <svg width="20" height="23" viewBox="0 0 20 23" style={{ flex: "none" }}>
            <path d="M10 1l9 3c0 8-2 14-9 18C3 18 1 12 1 4z" fill="#3f9a3f" stroke="#2a6a2a" />
            <path d="M6 9l4 6 5-9" stroke="#a8e6a8" strokeWidth="1.500" fill="none" />
          </svg>
          <TrayGap $w={8} />
          <svg width="22" height="24" viewBox="0 0 22 24" style={{ flex: "none" }}>
            <rect x="0" y="1" width="14" height="14" fill="#2f7fc0" />
            <rect x="8" y="9" width="14" height="14" fill="#18e018" />
          </svg>
          <TrayGap $w={8} />
          <svg width="20" height="24" viewBox="0 0 20 24" style={{ flex: "none" }}>
            <path d="M1 4v16c0 4 18 4 18 0V4z" fill="#f0b429" stroke="#333" />
            <path d="M1 4v6c3 3 15 3 18 0V4z" fill="#e8e8e0" />
            <ellipse cx="10" cy="4" rx="9" ry="3" fill="#f4f4ee" stroke="#333" />
            <path d="M1 12c3 3 15 3 18 0" stroke="#333" fill="none" />
          </svg>
          <TrayGap $w={9} />
          <PanelWord $width={93}>Sat 10:16 AM</PanelWord>
          <svg width="23" height="24" viewBox="0 0 24 24" style={{ flex: "none" }}>
            <rect width="24" height="24" fill="#4a68aa" />
            <circle cx="12" cy="12" r="5" fill="none" stroke="#f0f2fa" strokeWidth="3" />
            <path d="M12 4v4M12 16v4M4 12h4M16 12h4M6.500 6.500l2.500 2.500M15 15l2.500 2.500M17.500 6.500L15 9M9 15l-2.500 2.500" stroke="#f0f2fa" strokeWidth="2" />
          </svg>
        </Tray>
      </Taskbar>
    </Page>
  );
};

export default App;
